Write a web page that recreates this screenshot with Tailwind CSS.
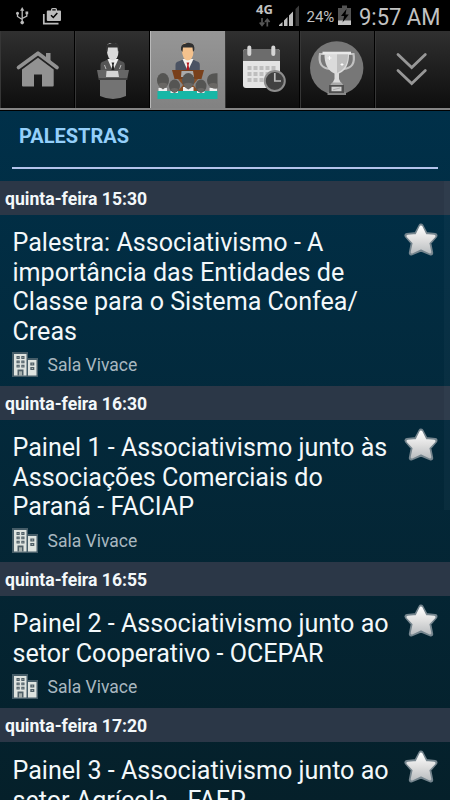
<!DOCTYPE html>
<html lang="pt-BR">
<head>
<meta charset="utf-8">
<title>Palestras</title>
<script src="https://cdn.jsdelivr.net/npm/@tailwindcss/browser@4"></script>
</head>
<body class="bg-black">
<svg class="absolute h-0 w-0" aria-hidden="true">
  <defs>
    <linearGradient id="sg" gradientUnits="userSpaceOnUse" x1="0" y1="4" x2="0" y2="32"><stop offset="0" stop-color="#fff"/><stop offset=".5" stop-color="#dedede"/><stop offset="1" stop-color="#b8bcbf"/></linearGradient>
    <symbol id="star" viewBox="0 0 36 36">
      <path d="M18 4 L22.500 12.500 L32 13.500 L25.700 20.800 L27.700 31 L18 27 L8.300 31 L10.300 20.800 L4 13.500 L13.500 12.500 Z" fill="#75858e" stroke="#75858e" stroke-width="5" stroke-linejoin="round"/>
      <path d="M18 5 L22.200 13.400 L31 14.200 L24.800 20.700 L26.800 30 L18 25.700 L9.200 30 L11.200 20.700 L5 14.200 L13.800 13.400 Z" fill="url(#sg)" stroke="url(#sg)" stroke-width="3" stroke-linejoin="round"/>
    </symbol>
    <symbol id="building" viewBox="0 0 26 26">
      <path d="M0 0H16V6H26V25H0Z" fill="#465d68"/>
      <path d="M2 2H14.500V23.500H2ZM16 8H24.500V23.500H16Z" fill="#dfe4e0"/>
      <path d="M4.500 4H7.700V7H4.500ZM9.300 4H12.500V7H9.300ZM4.500 8.500H7.700V11.300H4.500ZM9.300 8.500H12.500V11.300H9.300ZM4.500 12.800H7.700V15.500H4.500ZM9.300 12.800H12.500V15.500H9.300ZM18.300 10.500H22.300V13.500H18.300ZM18.300 15H22.300V18H18.300ZM5.500 17.500H11.500V23.500H5.500Z" fill="#506068"/>
      <path d="M7 19.300H10V23.500H7Z" fill="#a7b0ae"/>
      <path d="M5.600 5h1v1h-1zM10.400 5h1v1h-1zM5.600 9.400h1v1h-1zM10.400 9.400h1v1h-1zM5.600 13.700h1v1h-1zM10.400 13.700h1v1h-1zM19.700 11.500h1.300v1h-1.300zM19.700 16h1.300v1h-1.300z" fill="#a7b0ae"/>
    </symbol>
  </defs>
</svg>
<div class="relative flex h-[800px] w-[450px] flex-col overflow-hidden bg-black font-['Roboto',sans-serif]">
  <!-- Status bar -->
  <header class="flex h-[31px] shrink-0 text-[#c2c2c2]">
    <svg class="h-[31px] w-[225px]" viewBox="0 0 225 31">
      <g fill="none" stroke="#bcbcbc" stroke-width="1.300"><path d="M22.200 10V22M17.500 13.500V16.500L22.200 19.500M26.800 13V16L22.200 18.500"/></g>
      <g fill="#bcbcbc"><path d="M22.200 7L24.300 10.800H20.100Z"/><circle cx="17.500" cy="13.300" r="1.500"/><path d="M25.500 11.500h2.700v2.700h-2.700z"/><circle cx="22.200" cy="22.600" r="1.800"/></g>
      <path d="M43.800 14V23.600H58.500" fill="none" stroke="#bcbcbc" stroke-width="1.700"/>
      <path fill-rule="evenodd" fill="#bcbcbc" d="M47.800 10.500H51V9.500Q51 8 52.500 8H55.500Q57 8 57 9.500V10.500H60Q61 10.500 61 11.500V20Q61 21 60 21H47.800Q46.800 21 46.800 20V11.500Q46.800 10.500 47.800 10.500ZM52.300 9.300H55.700V10.500H52.300Z"/>
      <path d="M51 15.300L53.300 17.500L57.300 13" fill="none" stroke="#000" stroke-width="1.500"/>
    </svg>
    <div class="flex h-[31px] w-[225px]">
      <div class="ml-[31px] w-[19px]">
        <div class="pt-[2px] font-['Open_Sans',sans-serif] text-[13px] leading-[15px] font-bold">4G</div>
        <svg class="mt-px ml-[3px] h-[9px] w-[12px]" viewBox="0 0 12 9"><path d="M3 0V7M.7 4.500L3 7.300L5.300 4.500M8.300 8.500V2M6 4L8.300 1.300L10.600 4" fill="none" stroke="#555" stroke-width="1.700"/></svg>
      </div>
      <svg class="ml-[4px] h-[31px] w-[21px]" viewBox="0 0 21 31"><path d="M0 26V25L3.500 22V26ZM5 26V20.500L8.500 17V26ZM10 26V15.500L14 11.500V26Z" fill="#bfbfbf"/><path d="M16.500 26V9L20 5.500V26Z" fill="#3c3c3c"/></svg>
      <div class="ml-[6.500px] w-[28px] pt-[2px] text-[15px] leading-[30px] whitespace-nowrap">24%</div>
      <svg class="ml-[3.500px] h-[31px] w-[13px]" viewBox="0 0 13 31"><path d="M4 5.500H9V8H13V25H0V8H4Z" fill="#535353"/><path d="M0 20.500H13V25H0Z" fill="#c5c5c5"/><path d="M8.500 9L3 16H6.200L4.500 22.500L10.800 14.500H7.500Z" fill="#000"/></svg>
      <div class="ml-[7.500px] origin-left scale-x-[0.955] pt-[3px] text-[23px] leading-[30px] whitespace-nowrap">9:57 AM</div>
    </div>
  </header>
  <!-- Tabs -->
  <nav class="grid h-[79px] shrink-0 grid-cols-6 border-b-2 border-[#858585]">
    <div class="border-r border-l border-r-black border-l-[#363636] bg-gradient-to-b from-[#303030] to-[#0e0e0e]">
      <svg class="h-[77px] w-[73px]" viewBox="1 31 73 77"><path d="M18.500 67.500L38 53.200L57 67.500" fill="none" stroke="#929292" stroke-width="3.700" stroke-linecap="round" stroke-linejoin="round"/><path d="M46 53H50.500V62L46 58.500ZM38 57.700L53.700 69.500V85.500Q53.700 86.500 52.700 86.500H42V74.500H34V86.500H23Q22 86.500 22 85.500V69.500Z" fill="#929292"/></svg>
    </div>
    <div class="border-r border-l border-r-black border-l-[#363636] bg-gradient-to-b from-[#303030] to-[#0e0e0e]">
      <svg class="h-[77px] w-[73px]" viewBox="76 31 73 77">
        <path d="M100.500 71V65Q100.500 62 104 61.300L109 59H117L121.500 61.300Q124.800 62 124.800 65V71Z" fill="#555"/>
        <path d="M107.500 59L112.800 71L118.500 59Z" fill="#eee"/><path d="M111.500 62.500H114.300L113.600 65L114.500 71H111.300L112.300 65Z" fill="#222"/>
        <path d="M106.800 50V47Q107 43 111.500 43Q117.500 42.300 118.500 47V51Q118.300 60 112.800 60.500Q107.500 60 106.800 50Z" fill="#dadada"/>
        <path d="M106 50Q105.500 44 110 43.800Q113 42 116 43.300Q120 44.500 119.300 50L118 52L117.500 47.500H108L107.500 52Z" fill="#303030"/>
        <path d="M97 70H129L127.300 78.500H98.600Z" fill="#666"/><path d="M100 78.500H126V96Q113 102 100 96Z" fill="#737373"/><path d="M98.600 78H127.300V80H98.600Z" fill="#444"/><path d="M106.500 71H118L119 77H106Z" fill="#d5d5d5"/><path d="M106 69l-1.500-4M119.500 69l1.500-4" stroke="#bbb" stroke-width="1"/>
      </svg>
    </div>
    <div class="border-l border-[#b8b8b8] bg-gradient-to-b from-[#969696] to-[#828282]">
      <svg class="h-[77px] w-[74px]" viewBox="151 31 74 77">
        <path d="M175.500 71V65Q175.500 62 179 61.300L184 59H192L196.500 61.300Q199.800 62 199.800 65V71Z" fill="#4b5363"/>
        <path d="M182.500 59L187.800 71L193.500 59Z" fill="#f4f1ed"/><path d="M186.500 62.500H189.300L188.600 65L189.500 71H186.300L187.300 65Z" fill="#b51820"/>
        <path d="M181.800 50V47Q182 43 186.500 43Q192.500 42.300 193.500 47V51Q193.300 60 187.800 60.500Q182.500 60 181.800 50Z" fill="#f5c28d"/>
        <path d="M181 50Q180.500 44 185 43.800Q188 42 191 43.300Q195 44.500 194.300 50L193 52L192.500 47.500H183L182.500 52Z" fill="#303030"/>
        <path d="M172 70H204L201.500 79H174.500Z" fill="#79401b"/><path d="M178 79H198L193 85L200 92H177L183 85Z" fill="#8a5026"/><path d="M181.500 71H193L194 77H181Z" fill="#aaa"/>
        <path d="M157.500 91H217.500V99H157.500Z" fill="#17b7a6"/>
        <path d="M158.500 91V88H167V91ZM183 91V87H193.500V91ZM209.500 91V88H217V91ZM170.500 93V91H178V93ZM197 93V91H204.500V93Z" fill="#eee"/>
        <g fill="#555553"><ellipse cx="174.500" cy="86" rx="5.500" ry="6.500"/><ellipse cx="201" cy="86" rx="5.500" ry="6.500"/><ellipse cx="163" cy="80.500" rx="6" ry="7.500"/><ellipse cx="188.300" cy="80.500" rx="6.200" ry="7.500"/><path d="M217.500 73.300V87.500Q207 89 207 80Q207.500 72.500 217.500 73.300Z"/></g>
        <path d="M158.300 84Q163 81.500 167.700 84Q166.500 88 163 89.500Q159.500 88 158.300 84ZM183.500 84Q188.300 81.500 193.100 84Q192 88 188.300 89.500Q184.600 88 183.500 84ZM208.500 84.500Q213 82 217.500 84V88.500Q211 89.500 208.500 84.500ZM170.700 89Q174.500 87 178.300 89Q177 92 174.500 93Q172 92 170.700 89ZM197.200 89Q201 87 204.800 89Q203.500 92 201 93Q198.500 92 197.200 89Z" fill="#696764"/>
      </svg>
    </div>
    <div class="border-r border-l border-r-black border-l-[#363636] bg-gradient-to-b from-[#303030] to-[#0e0e0e]">
      <svg class="h-[77px] w-[73px]" viewBox="226 31 73 77">
        <rect x="243" y="49" width="37" height="39" rx="3" fill="#e4e4e4"/><path d="M243 61V52Q243 49 246 49H277Q280 49 280 52V61Z" fill="#6c6c6c"/>
        <path d="M249.300 47.500V54M273.300 47.500V54" stroke="#d5d5d5" stroke-width="4" stroke-linecap="round"/>
        <path d="M247.500 66h4v4h-4zM253.500 66h4v4h-4zM259.500 66h4v4h-4zM265.500 66h4v4h-4zM271.500 66h4v4h-4zM247.500 72h4v4h-4zM253.500 72h4v4h-4zM259.500 72h4v4h-4zM265.500 72h4v4h-4zM247.500 78h4v4h-4zM253.500 78h4v4h-4zM259.500 78h4v4h-4z" fill="#bebebe"/>
        <circle cx="274.800" cy="81" r="10" fill="#414141" stroke="#8e8e8e" stroke-width="2"/><path d="M274.800 73V81H281" fill="none" stroke="#bbb" stroke-width="1.700"/>
      </svg>
    </div>
    <div class="border-r border-l border-r-black border-l-[#363636] bg-gradient-to-b from-[#303030] to-[#0e0e0e]">
      <svg class="h-[77px] w-[73px]" viewBox="301 31 73 77">
        <circle cx="336.700" cy="68" r="26.700" fill="#777"/>
        <path d="M325.500 54H320Q317.500 68 330 69M348 54H353.500Q356 68 343.500 69" fill="none" stroke="#c2c2c2" stroke-width="2.200"/>
        <path d="M324.500 53H349Q349.500 69 339 73.500V79L341.500 84H332L334.500 79V73.500Q324 69 324.500 53Z" fill="#dbdbdb"/><path d="M337 54H348Q348.300 68 337 73Z" fill="#bdbdbd"/><path d="M322.500 51.700H351V54.300H322.500Z" fill="#e8e8e8"/>
        <path d="M329.500 56V60M327.500 58H331.500M342 63V66M340.500 64.500H343.500" stroke="#fff" stroke-width=".9"/><path d="M332 82.500H341.500L343.500 85.500H330Z" fill="#aaa"/><path d="M327.500 92H346V95H327.500Z" fill="#888"/>
        <rect x="329" y="85" width="15" height="8" fill="#505050"/><rect x="331.500" y="86.700" width="10" height="4.500" fill="#d0d0d0"/><path d="M333 89.800L340 88" stroke="#999" stroke-width=".7"/>
      </svg>
    </div>
    <div class="border-l border-[#363636] bg-gradient-to-b from-[#303030] to-[#0e0e0e]">
      <svg class="h-[77px] w-[74px]" viewBox="376 31 74 77"><path d="M398 54.500L411.700 67.500L425.300 54.500M398 70.500L411.700 83.500L425.300 70.500" fill="none" stroke="#979797" stroke-width="2.800" stroke-linecap="round"/></svg>
    </div>
  </nav>
  <!-- Talks list -->
  <main class="mt-px min-h-0 flex-1 overflow-hidden bg-gradient-to-b from-[#003049] to-[#05202a] text-[#f3f8fa]">
    <div class="h-[70px] px-[12px]">
      <h1 class="h-[58px] border-b-2 border-[#b4c3ea] pt-[11px] pl-[7px] text-[20px] leading-[28px] font-bold text-[#94cffa]">PALESTRAS</h1>
    </div>
    <h2 class="h-[34px] bg-[#2b3747] pl-[5px] text-[17.600px] leading-[37px] font-bold">quinta-feira 15:30</h2>
    <article class="relative h-[171px] pt-[13px] pl-[12.500px]">
      <p class="text-[25.100px] leading-[29.500px] whitespace-nowrap">Palestra: Associativismo - A<br>importância das Entidades de<br>Classe para o Sistema Confea/<br>Creas</p>
      <div class="mt-[6px] flex h-[26px] gap-[9.500px] text-[17.500px] leading-[26px] text-[#a9b8c0]"><svg class="-ml-[0.500px] h-[26px] w-[26px]"><use href="#building"/></svg>Sala Vivace</div>
      <svg class="absolute top-[7px] left-[403px] h-[36px] w-[36px]"><use href="#star"/></svg>
    </article>
    <h2 class="h-[34px] bg-[#2b3747] pl-[5px] text-[17.600px] leading-[37px] font-bold">quinta-feira 16:30</h2>
    <article class="relative h-[142px] pt-[13px] pl-[12.500px]">
      <p class="text-[25.100px] leading-[29.500px] whitespace-nowrap">Painel 1 - Associativismo junto às<br>Associações Comerciais do<br>Paraná - FACIAP</p>
      <div class="mt-[6px] flex h-[26px] gap-[9.500px] text-[17.500px] leading-[26px] text-[#a9b8c0]"><svg class="-ml-[0.500px] h-[26px] w-[26px]"><use href="#building"/></svg>Sala Vivace</div>
      <svg class="absolute top-[7px] left-[403px] h-[36px] w-[36px]"><use href="#star"/></svg>
    </article>
    <h2 class="h-[34px] bg-[#2b3747] pl-[5px] text-[17.600px] leading-[37px] font-bold">quinta-feira 16:55</h2>
    <article class="relative h-[112px] pt-[13px] pl-[12.500px]">
      <p class="text-[25.100px] leading-[29.500px] whitespace-nowrap">Painel 2 - Associativismo junto ao<br>setor Cooperativo - OCEPAR</p>
      <div class="mt-[6px] flex h-[26px] gap-[9.500px] text-[17.500px] leading-[26px] text-[#a9b8c0]"><svg class="-ml-[0.500px] h-[26px] w-[26px]"><use href="#building"/></svg>Sala Vivace</div>
      <svg class="absolute top-[7px] left-[403px] h-[36px] w-[36px]"><use href="#star"/></svg>
    </article>
    <h2 class="h-[34px] bg-[#2b3747] pl-[5px] text-[17.600px] leading-[37px] font-bold">quinta-feira 17:20</h2>
    <article class="relative h-[112px] pt-[14px] pl-[12.500px]">
      <p class="text-[25.100px] leading-[29.500px] whitespace-nowrap">Painel 3 - Associativismo junto ao<br>setor Agrícola - FAEP</p>
      <svg class="absolute top-[7px] left-[403px] h-[36px] w-[36px]"><use href="#star"/></svg>
    </article>
  </main>
  <div class="absolute top-[181px] right-0 h-[329px] w-[6px] bg-[#8ba0ad]/5"></div>
</div>
</body>
</html>
